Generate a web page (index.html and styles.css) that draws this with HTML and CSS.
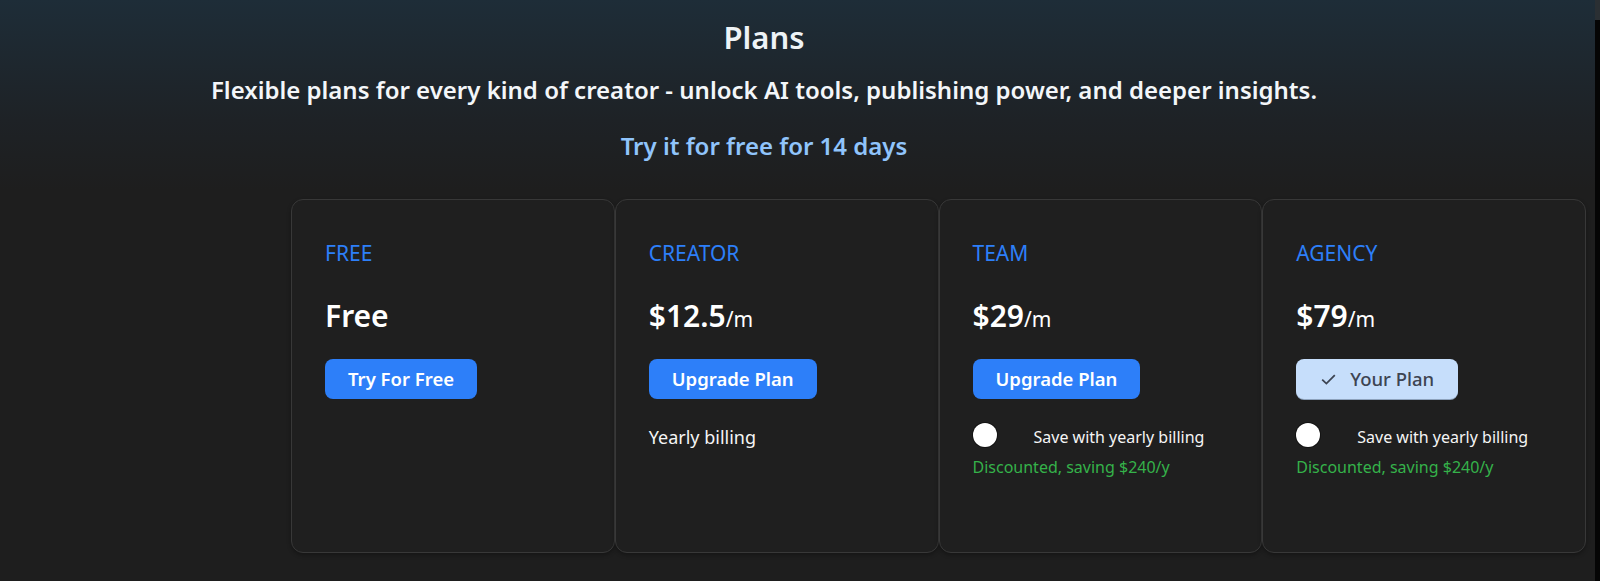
FILE: index.html
```html
<!DOCTYPE html>
<html lang="en">
  <head>
    <meta charset="UTF-8" />
    <meta name="viewport" content="width=device-width, initial-scale=1.0" />
    <link rel="stylesheet" href="styles.css">
    <title>Plans</title>
  </head>
  <body>
    <main>
      <header class="intro">
        <h1>Plans</h1>
        <p class="lead">Flexible plans for every kind of creator - unlock AI tools, publishing power, and deeper insights.</p>
        <p class="trial">Try it for free for 14 days</p>
      </header>

      <section class="plans">
        <div class="plan">
          <h2 class="plan-name">FREE</h2>
          <p class="price">Free</p>
          <div><button class="btn">Try For Free</button></div>
        </div>

        <div class="plan">
          <h2 class="plan-name">CREATOR</h2>
          <p class="price">$12.5<span class="per">/m</span></p>
          <div><button class="btn">Upgrade Plan</button></div>
          <p class="billing">Yearly billing</p>
        </div>

        <div class="plan">
          <h2 class="plan-name">TEAM</h2>
          <p class="price">$29<span class="per">/m</span></p>
          <div><button class="btn">Upgrade Plan</button></div>
          <label class="switch-row">
            <span class="switch"><span class="thumb"></span></span>
            <span class="switch-label">Save with yearly billing</span>
          </label>
          <p class="discount">Discounted, saving $240/y</p>
        </div>

        <div class="plan">
          <h2 class="plan-name">AGENCY</h2>
          <p class="price">$79<span class="per">/m</span></p>
          <div>
            <button class="btn current">
              <svg width="15" height="11" viewBox="0 0 15 11">
                <polyline points="1.2,5.6 5.4,9.6 13.8,1.2" fill="none" stroke="currentColor" stroke-width="1.8" />
              </svg>
              Your Plan
            </button>
          </div>
          <label class="switch-row">
            <span class="switch"><span class="thumb"></span></span>
            <span class="switch-label">Save with yearly billing</span>
          </label>
          <p class="discount">Discounted, saving $240/y</p>
        </div>
      </section>
    </main>
    <div class="edge"></div>
  </body>
</html>
```

FILE: styles.css
```css
* {
  box-sizing: border-box;
  margin: 0;
  padding: 0;
  font-family: 'Noto Sans', 'Open Sans', Arial, sans-serif;
  --blue: #2d7ff9;
  --lightblue: #c6defb;
  --green: #35b24a;
  --card: #1f1f1f;
  --line: #383838;
}

body {
  display: flex;
  min-height: 581px;
  background: linear-gradient(to bottom, #1e2d38 0, #1e2226 120px, #1e1e1e 190px) #1e1e1e;
  color: #fff;
  overflow: hidden;
}

main {
  flex: 1;
}

.edge {
  width: 5px;
  background: #050505;
  border-top: 20px solid #2a2f33;
}

.intro {
  width: 1528px;
  padding-top: 17px;
  text-align: center;
}

h1 {
  font-size: 31px;
  font-weight: 600;
  line-height: 40px;
  color: #eef3f6;
}

.lead {
  margin-top: 17px;
  font-size: 24px;
  font-weight: 600;
  line-height: 32px;
  color: #f3f6f9;
}

.trial {
  margin-top: 24px;
  font-size: 24px;
  font-weight: 600;
  line-height: 32px;
  color: #90c4fb;
}

.plans {
  display: grid;
  grid-template-columns: repeat(4, 323.75px);
  margin: 37px 0 0 291px;
}

.plan {
  height: 354px;
  padding: 39px 33px 0;
  border: 1px solid var(--line);
  border-radius: 12px;
  background-color: var(--card);
  box-shadow: 0 2px 4px rgba(0, 0, 0, 0.3);
}

.plan-name {
  font-size: 21px;
  font-weight: 400;
  line-height: 28px;
  color: var(--blue);
}

.price {
  margin-top: 29px;
  font-size: 30px;
  font-weight: 600;
  line-height: 40px;
}

.per {
  font-size: 21px;
  font-weight: 400;
  line-height: 1;
}

.btn {
  display: inline-flex;
  align-items: center;
  gap: 14px;
  height: 40px;
  margin-top: 23px;
  padding: 0 23px;
  border: none;
  border-radius: 8px;
  font-size: 18.5px;
  font-weight: 600;
  line-height: 40px;
  color: #fff;
  background-color: var(--blue);
  cursor: pointer;
}

.btn.current {
  padding: 0 24px 0 25px;
  font-weight: 500;
  color: #3d4452;
  background-color: var(--lightblue);
  box-shadow: 0 1px 0 #8ea3bd;
}

.billing {
  margin-top: 26px;
  font-size: 18px;
  line-height: 24px;
  color: #f5f5f5;
}

.switch-row {
  display: flex;
  align-items: flex-start;
  gap: 37px;
  margin-top: 24px;
}

.switch {
  display: block;
  width: 24px;
  height: 24px;
}

.thumb {
  display: block;
  width: 24px;
  height: 24px;
  border-radius: 50%;
  background-color: #fff;
  box-shadow: 0 0 0 1px rgba(0, 0, 0, 0.4);
}

.switch-label {
  margin-top: 2px;
  font-size: 16px;
  line-height: 24px;
  color: #f5f5f5;
}

.discount {
  margin-top: 7px;
  font-size: 16px;
  line-height: 22px;
  color: var(--green);
}
```
